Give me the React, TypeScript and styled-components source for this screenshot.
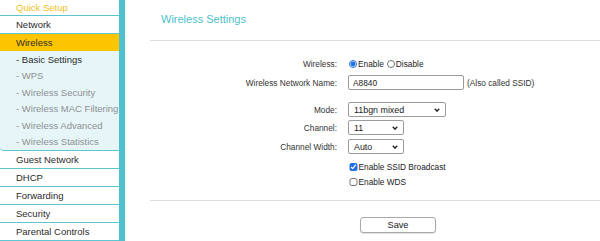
import styled, { createGlobalStyle } from 'styled-components';

const teal = '#4fc1ce';
const line = '#5cc6d3';

const GlobalStyle = createGlobalStyle`
  html, body {
    margin: 0;
    padding: 0;
    background: #ffffff;
  }
  body {
    font-family: "Liberation Sans", Arial, Helvetica, sans-serif;
    color: #333;
  }
`;

// Layout
const Page = styled.div`
  display: flex;
  width: 600px;
  height: 241px;
  overflow: hidden;
`;

const Sidebar = styled.nav`
  width: 119px;
  flex-shrink: 0;
  border-right: 6px solid ${teal};
  overflow: hidden;
  font-size: 9.5px;
  white-space: nowrap;
`;

const NavItem = styled.div<{ $variant?: 'quick' | 'active' }>`
  height: ${(p) => (p.$variant === 'quick' ? 15 : 17)}px;
  line-height: ${(p) => (p.$variant === 'quick' ? 15 : 17)}px;
  padding-left: 16px;
  color: ${(p) => (p.$variant === 'quick' ? '#f2bf1c' : '#2b2b2b')};
  background: ${(p) => (p.$variant === 'active' ? '#fdc400' : '#ffffff')};
  border-bottom: ${(p) => (p.$variant === 'active' ? 'none' : `1px solid ${line}`)};
`;

const SubMenu = styled.div`
  background: #e6f6f8;
  padding-top: 1px;
  border-bottom: 1px solid ${line};
  border-bottom-left-radius: 4px;
`;

const SubItem = styled.div<{ $current?: boolean }>`
  height: 16.4px;
  line-height: 16.4px;
  padding-left: 16px;
  color: ${(p) => (p.$current ? '#2b2b2b' : '#8d8f91')};
`;

const Main = styled.main`
  flex: 1;
  display: flex;
  flex-direction: column;
  font-size: 8.3px;
`;

const Title = styled.h1`
  margin: 0;
  padding: 13px 0 0 36px;
  height: 40px;
  box-sizing: border-box;
  font-size: 11px;
  line-height: 13px;
  font-weight: normal;
  color: #4dbfcc;
`;

const Divider = styled.hr<{ $mt?: number }>`
  margin: ${(p) => p.$mt ?? 0}px 0 0 25px;
  border: none;
  border-top: 1px solid #dcdcdc;
  height: 0;
`;

const FormRow = styled.div<{ $h: number; $mt: number }>`
  display: grid;
  grid-template-columns: 212px auto;
  column-gap: 11px;
  align-items: center;
  height: ${(p) => p.$h}px;
  margin-top: ${(p) => p.$mt}px;
`;

const Label = styled.label`
  text-align: right;
  color: #333;
`;

const Controls = styled.div`
  display: flex;
  align-items: center;
  color: #222;
`;

const Radio = styled.input.attrs({ type: 'radio' })`
  width: 8px;
  height: 8px;
  margin: 0 1px 0 1px;
  accent-color: #1f6fe5;
`;

const Check = styled.input.attrs({ type: 'checkbox' })`
  width: 8.5px;
  height: 8.5px;
  margin: 0 1px 0 1px;
  accent-color: #1f6fe5;
`;

const OptionText = styled.span<{ $gap?: number }>`
  margin-right: ${(p) => p.$gap ?? 0}px;
`;

const TextInput = styled.input`
  width: 116px;
  height: 15px;
  box-sizing: border-box;
  border: 1px solid #9b9b9b;
  border-radius: 2px;
  padding: 0 4px;
  font: inherit;
  font-size: 8.3px;
  color: #222;
  outline: none;
`;

const Hint = styled.span`
  margin-left: 3px;
  color: #333;
`;

const SelectBox = styled.div<{ $w: number }>`
  width: ${(p) => p.$w}px;
  height: 15px;
  box-sizing: border-box;
  border: 1px solid #9b9b9b;
  border-radius: 2px;
  display: flex;
  align-items: center;
  justify-content: space-between;
  padding: 0 5px 0 5px;
  font-size: 8.9px;
  color: #1a1a1a;
  background: #fff;
`;

const Footer = styled.div`
  padding-left: 235px;
  margin-top: 16px;
`;

const SaveButton = styled.button`
  width: 76px;
  height: 16px;
  box-sizing: border-box;
  background: #ffffff;
  border: 1px solid #a9a9a9;
  border-radius: 3px;
  box-shadow: 0 1px 1px rgba(0, 0, 0, 0.12);
  font-family: inherit;
  font-size: 9.2px;
  color: #1a1a1a;
  padding: 0;
`;

function Chevron() {
  return (
    <svg width="6" height="4" viewBox="0 0 6 4">
      <polyline points="0.8,0.7 3,3.1 5.2,0.7" fill="none" stroke="#1f1f1f" strokeWidth="1.4" />
    </svg>
  );
}

function Select({ value, width }: { value: string; width: number }) {
  return (
    <SelectBox $w={width}>
      <span>{value}</span>
      <Chevron />
    </SelectBox>
  );
}

const mainMenu = ['Guest Network', 'DHCP', 'Forwarding', 'Security', 'Parental Controls'];
const wirelessMenu = [
  '- Basic Settings',
  '- WPS',
  '- Wireless Security',
  '- Wireless MAC Filtering',
  '- Wireless Advanced',
  '- Wireless Statistics',
];

export default function App() {
  return (
    <>
      <GlobalStyle />
      <Page>
        <Sidebar>
          <NavItem $variant="quick">Quick Setup</NavItem>
          <NavItem>Network</NavItem>
          <NavItem $variant="active">Wireless</NavItem>
          <SubMenu>
            {wirelessMenu.map((item, i) => (
              <SubItem key={item} $current={i === 0}>
                {item}
              </SubItem>
            ))}
          </SubMenu>
          {mainMenu.map((item) => (
            <NavItem key={item}>{item}</NavItem>
          ))}
        </Sidebar>

        <Main>
          <Title>Wireless Settings</Title>
          <Divider />

          <FormRow $h={12} $mt={17}>
            <Label>Wireless:</Label>
            <Controls>
              <Radio name="wl" defaultChecked />
              <OptionText $gap={2}>Enable</OptionText>
              <Radio name="wl" />
              <OptionText>Disable</OptionText>
            </Controls>
          </FormRow>

          <FormRow $h={15} $mt={5}>
            <Label>Wireless Network Name:</Label>
            <Controls>
              <TextInput defaultValue="A8840" />
              <Hint>(Also called SSID)</Hint>
            </Controls>
          </FormRow>

          <FormRow $h={15} $mt={12}>
            <Label>Mode:</Label>
            <Controls>
              <Select value="11bgn mixed" width={98} />
            </Controls>
          </FormRow>

          <FormRow $h={15} $mt={3}>
            <Label>Channel:</Label>
            <Controls>
              <Select value="11" width={56} />
            </Controls>
          </FormRow>

          <FormRow $h={15} $mt={4}>
            <Label>Channel Width:</Label>
            <Controls>
              <Select value="Auto" width={56} />
            </Controls>
          </FormRow>

          <FormRow $h={12} $mt={7}>
            <span />
            <Controls>
              <Check defaultChecked />
              <span>Enable SSID Broadcast</span>
            </Controls>
          </FormRow>

          <FormRow $h={12} $mt={3}>
            <span />
            <Controls>
              <Check />
              <span>Enable WDS</span>
            </Controls>
          </FormRow>

          <Divider $mt={12} />

          <Footer>
            <SaveButton>Save</SaveButton>
          </Footer>
        </Main>
      </Page>
    </>
  );
}
